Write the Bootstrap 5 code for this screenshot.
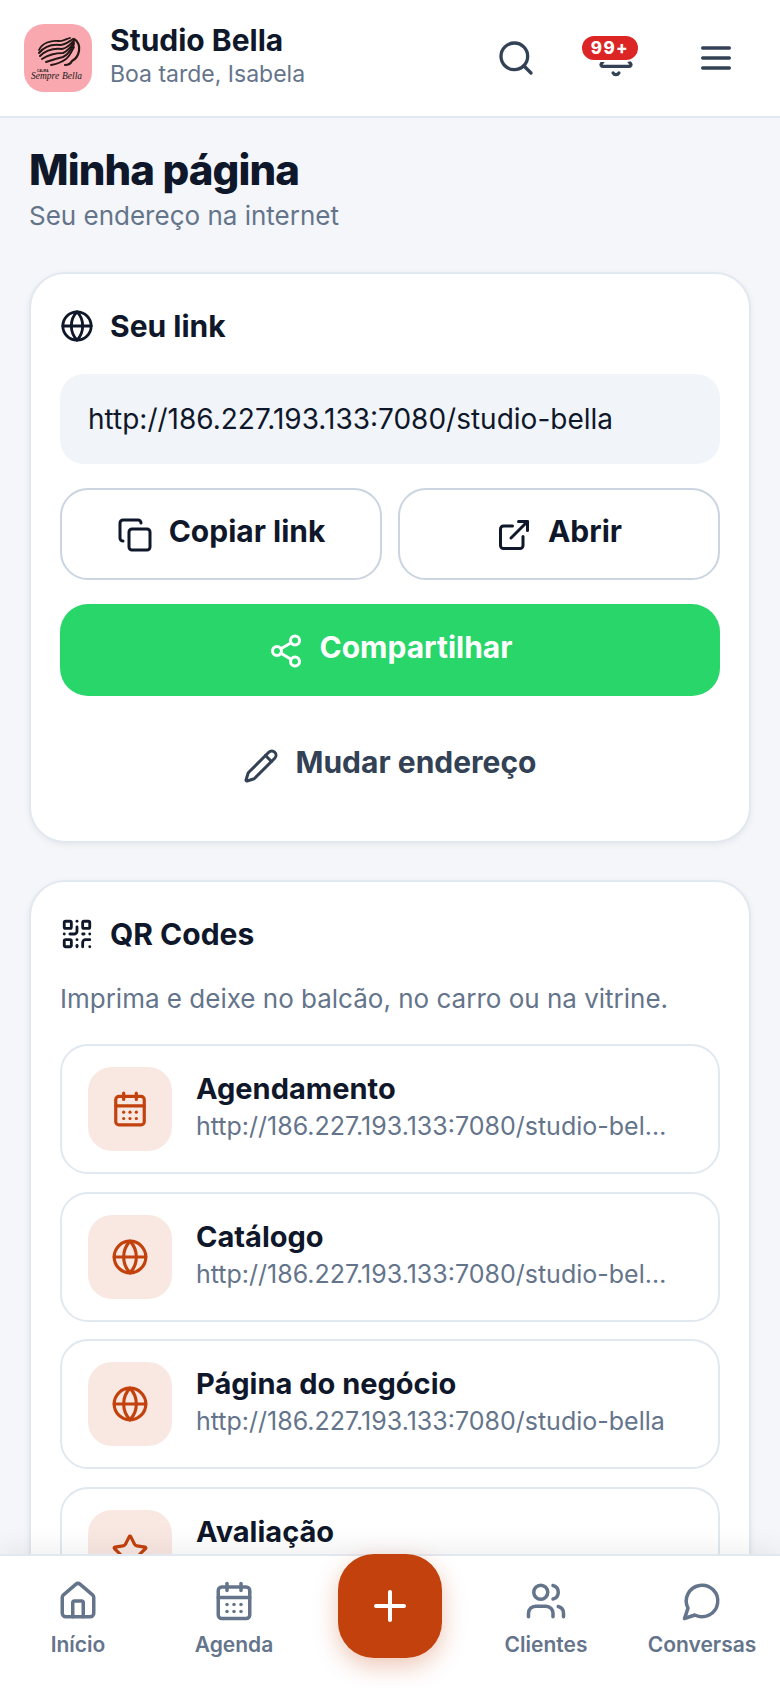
<!DOCTYPE html>
<html lang="pt-BR">
<head>
<meta charset="utf-8">
<title>Minha página</title>
<link href="https://cdn.jsdelivr.net/npm/bootstrap@5.3.0/dist/css/bootstrap.min.css" rel="stylesheet">
<style>
html,body{height:100%}
body{font-family:Inter,"Liberation Sans",sans-serif;background:#f4f6f9;color:#0f172a;overflow:hidden}
.shell{height:1688px}
.ico{fill:none;stroke:currentColor;stroke-width:2;stroke-linecap:round;stroke-linejoin:round;flex:none;display:block}
.topbar{height:118px;flex:none;background:#fff;border-bottom:2px solid #e2e8f0;padding:0 44px 0 24px}
.brand-logo{width:68px;height:68px;border-radius:20px;flex:none;display:block}
.brand-text{margin:0 0 5px 18px}
.brand-name{font-size:30px;font-weight:700;line-height:36px;margin-bottom:1px}
.brand-sub{font-size:23px;line-height:30px;color:#64748b}
.top-btn{width:40px;height:40px;color:#334155;position:relative}
.top-actions{gap:60px}
.bubble{position:absolute;left:-16px;top:-4px;width:60px;height:28px;border-radius:14px;background:#dc2626;border:2px solid #fff;color:#fff;font-size:17px;font-weight:800;line-height:24px;text-align:center;letter-spacing:1.4px}
.page{padding:27px 29px 0;min-height:0}
.page-title{font-size:42px;font-weight:800;line-height:50px;margin:0;letter-spacing:-.9px}
.page-sub{font-size:26px;line-height:34px;color:#64748b;margin-top:4px}
.panel{border:2px solid #e2e8f0;border-radius:36px;background:#fff;box-shadow:0 2px 6px rgba(15,23,42,.06);padding:32px 29px 0}
.panel-a{margin-top:39px;height:571px}
.panel-b{margin-top:37px}
.panel-head{font-size:30px;font-weight:700;line-height:40px;gap:16px}
.link-box{height:90px;margin-top:28px;border-radius:24px;background:#f1f5f9;padding:0 28px;font-size:28px;display:flex;align-items:center}
.two-up{gap:16px;margin-top:24px}
.btn.act{height:92px;border-radius:28px;font-size:30px;font-weight:700;display:flex;align-items:center;justify-content:center;gap:16px;padding:0}
.btn.act .ico{margin-top:2px}
.btxt{margin-bottom:5px}
.btn.ghost{flex:1 1 0;border:2px solid #cbd5e1;background:#fff;color:#0f172a}
.btn.wa{width:100%;margin-top:24px;background:#28d66a;border:0;color:#fff}
.btn.plain{width:100%;margin-top:27px;height:84px;background:transparent;border:0;color:#334155}
.panel-note{font-size:26px;line-height:34px;color:#64748b;margin-top:28px}
.qr-list{gap:17.6px;margin-top:28px}
.qr-row{height:130px;flex:none;border:2px solid #e2e8f0;border-radius:28px;padding:0 48px 0 26px;gap:24px;background:#fff}
.qr-tile{width:84px;height:84px;border-radius:24px;background:#f9e8e1;color:#c2410c;flex:none}
.qr-text{margin-bottom:4px}
.qr-name{font-size:29px;font-weight:700;line-height:36px;margin-bottom:2px}
.qr-url{font-size:25px;line-height:34px;color:#64748b}
.bottombar{height:134px;flex:none;background:#fff;border-top:2px solid #e2e8f0;box-shadow:0 -8px 24px rgba(15,23,42,.06);position:relative;z-index:5}
.tab{flex:1 1 0;min-width:0;color:#64748b;font-size:21px;font-weight:600;line-height:28px;padding-top:24px;gap:9px;white-space:nowrap}
.fab{width:104px;height:104px;border-radius:36px;background:#c2410c;color:#fff;box-shadow:0 8px 24px rgba(194,65,12,.3);margin-top:-2px}
.fab-wrap{flex:1 1 0}
.logo-script{font-family:"Liberation Serif",serif;font-style:italic;fill:#231815}
.logo-tiny{font-family:"Liberation Sans",sans-serif;font-weight:700;fill:#231815}
</style>
</head>
<body>
<div class="shell d-flex flex-column">
  <header class="topbar d-flex align-items-center justify-content-between">
    <div class="d-flex align-items-center">
      <svg class="brand-logo" viewBox="0 0 68 68" role="img" aria-label="Logo">
        <rect width="68" height="68" fill="#f9a8b0"/>
        <g fill="none" stroke="#231815" stroke-linecap="round">
          <path d="M15 26C18 19 27 16 35 17C39 17.500 42 15 46 14" stroke-width="1.800"/>
          <path d="M15 29C20 23 28 20 36 21C41 21 44 18 49 15" stroke-width="2"/>
          <path d="M16 32C22 26 30 24 38 25C43 24 47 20 50 16" stroke-width="2"/>
          <path d="M18 35C24 31 32 29 39 29C44 27 47 23 50 18" stroke-width="2"/>
          <path d="M22 38C28 36 34 34 39 33C44 31 47 26 50 20" stroke-width="2"/>
          <path d="M27 41C33 40 38 38 42 35C46 32 48 27 50 23" stroke-width="1.800"/>
          <path d="M50 15C54 17 56 22 55 27C54 32 52 35 48 37C47 39 44 41 41 41" stroke-width="2.200"/>
        </g>
        <text class="logo-tiny" x="13" y="48" font-size="3">CALIRA</text>
        <text class="logo-script" x="7" y="55" font-size="9.500">Sempre</text>
        <text class="logo-script" x="38" y="55" font-size="9.500">Bella</text>
      </svg>
      <div class="brand-text">
        <div class="brand-name">Studio Bella</div>
        <div class="brand-sub">Boa tarde, Isabela</div>
      </div>
    </div>
    <div class="d-flex align-items-center top-actions">
      <div class="top-btn"><svg class="ico" width="40" height="40" viewBox="0 0 24 24"><path d="m21 21-4.34-4.34"/><circle cx="11" cy="11" r="8"/></svg></div>
      <div class="top-btn"><svg class="ico" width="40" height="40" viewBox="0 0 24 24"><path d="M10.268 21a2 2 0 0 0 3.464 0"/><path d="M3.262 15.326A1 1 0 0 0 4 17h16a1 1 0 0 0 .74-1.673C19.41 13.956 18 12.499 18 8A6 6 0 0 0 6 8c0 4.499-1.411 5.956-2.738 7.326"/></svg><span class="bubble">99+</span></div>
      <div class="top-btn"><svg class="ico" width="40" height="40" viewBox="0 0 24 24"><path d="M4 6h16"/><path d="M4 12h16"/><path d="M4 18h16"/></svg></div>
    </div>
  </header>

  <main class="page flex-grow-1 overflow-hidden">
    <h1 class="page-title">Minha página</h1>
    <div class="page-sub">Seu endereço na internet</div>

    <section class="panel panel-a">
      <div class="panel-head d-flex align-items-center">
        <svg class="ico" width="34" height="34" viewBox="0 0 24 24"><circle cx="12" cy="12" r="10"/><path d="M12 2a14.500 14.500 0 0 0 0 20 14.500 14.500 0 0 0 0-20"/><path d="M2 12h20"/></svg>
        <span>Seu link</span>
      </div>
      <div class="link-box">http://186.227.193.133:7080/studio-bella</div>
      <div class="d-flex two-up">
        <button class="btn act ghost" type="button"><svg class="ico" width="36" height="36" viewBox="0 0 24 24"><rect width="14" height="14" x="8" y="8" rx="2" ry="2"/><path d="M4 16c-1.100 0-2-.9-2-2V4c0-1.100.9-2 2-2h10c1.100 0 2 .9 2 2"/></svg><span class="btxt">Copiar link</span></button>
        <button class="btn act ghost" type="button"><svg class="ico" width="36" height="36" viewBox="0 0 24 24"><path d="M15 3h6v6"/><path d="M10 14 21 3"/><path d="M18 13v6a2 2 0 0 1-2 2H5a2 2 0 0 1-2-2V8a2 2 0 0 1 2-2h6"/></svg><span class="btxt">Abrir</span></button>
      </div>
      <button class="btn act wa" type="button"><svg class="ico" width="36" height="36" viewBox="0 0 24 24"><circle cx="18" cy="5" r="3"/><circle cx="6" cy="12" r="3"/><circle cx="18" cy="19" r="3"/><line x1="8.590" x2="15.420" y1="13.510" y2="17.490"/><line x1="15.410" x2="8.590" y1="6.510" y2="10.490"/></svg><span class="btxt">Compartilhar</span></button>
      <button class="btn act plain" type="button"><svg class="ico" width="36" height="36" viewBox="0 0 24 24"><path d="M21.174 6.812a1 1 0 0 0-3.986-3.987L3.842 16.174a2 2 0 0 0-.5.83l-1.321 4.352a.5.5 0 0 0 .623.622l4.353-1.32a2 2 0 0 0 .83-.497z"/><path d="m15 5 4 4"/></svg><span class="btxt">Mudar endereço</span></button>
    </section>

    <section class="panel panel-b">
      <div class="panel-head d-flex align-items-center">
        <svg class="ico" width="34" height="34" viewBox="0 0 24 24"><rect width="5" height="5" x="3" y="3" rx="1"/><rect width="5" height="5" x="16" y="3" rx="1"/><rect width="5" height="5" x="3" y="16" rx="1"/><path d="M21 16h-3a2 2 0 0 0-2 2v3"/><path d="M21 21v.01"/><path d="M12 7v3a2 2 0 0 1-2 2H7"/><path d="M3 12h.01"/><path d="M12 3h.01"/><path d="M12 16v.01"/><path d="M16 12h1"/><path d="M21 12v.01"/><path d="M12 21v-1"/></svg>
        <span>QR Codes</span>
      </div>
      <div class="panel-note">Imprima e deixe no balcão, no carro ou na vitrine.</div>
      <div class="qr-list d-flex flex-column">
        <div class="qr-row d-flex align-items-center">
          <div class="qr-tile d-flex align-items-center justify-content-center"><svg class="ico" width="38" height="38" viewBox="0 0 24 24"><path d="M8 2v4"/><path d="M16 2v4"/><rect width="18" height="18" x="3" y="4" rx="2"/><path d="M3 10h18"/><path d="M8 14h.01"/><path d="M12 14h.01"/><path d="M16 14h.01"/><path d="M8 18h.01"/><path d="M12 18h.01"/><path d="M16 18h.01"/></svg></div>
          <div class="qr-text overflow-hidden"><div class="qr-name">Agendamento</div><div class="qr-url text-truncate">http://186.227.193.133:7080/studio-bella/agendar</div></div>
        </div>
        <div class="qr-row d-flex align-items-center">
          <div class="qr-tile d-flex align-items-center justify-content-center"><svg class="ico" width="38" height="38" viewBox="0 0 24 24"><circle cx="12" cy="12" r="10"/><path d="M12 2a14.500 14.500 0 0 0 0 20 14.500 14.500 0 0 0 0-20"/><path d="M2 12h20"/></svg></div>
          <div class="qr-text overflow-hidden"><div class="qr-name">Catálogo</div><div class="qr-url text-truncate">http://186.227.193.133:7080/studio-bella/catalogo</div></div>
        </div>
        <div class="qr-row d-flex align-items-center">
          <div class="qr-tile d-flex align-items-center justify-content-center"><svg class="ico" width="38" height="38" viewBox="0 0 24 24"><circle cx="12" cy="12" r="10"/><path d="M12 2a14.500 14.500 0 0 0 0 20 14.500 14.500 0 0 0 0-20"/><path d="M2 12h20"/></svg></div>
          <div class="qr-text overflow-hidden"><div class="qr-name">Página do negócio</div><div class="qr-url text-truncate">http://186.227.193.133:7080/studio-bella</div></div>
        </div>
        <div class="qr-row d-flex align-items-center">
          <div class="qr-tile d-flex align-items-center justify-content-center"><svg class="ico" width="38" height="38" viewBox="0 0 24 24"><path d="M11.525 2.295a.53.53 0 0 1 .95 0l2.31 4.679a2.123 2.123 0 0 0 1.595 1.16l5.166.756a.53.53 0 0 1 .294.904l-3.736 3.638a2.123 2.123 0 0 0-.611 1.878l.882 5.14a.53.53 0 0 1-.771.56l-4.618-2.428a2.122 2.122 0 0 0-1.973 0L6.396 21.01a.53.53 0 0 1-.77-.56l.881-5.139a2.122 2.122 0 0 0-.611-1.879L2.16 9.795a.53.53 0 0 1 .294-.906l5.165-.755a2.122 2.122 0 0 0 1.597-1.16z"/></svg></div>
          <div class="qr-text overflow-hidden"><div class="qr-name">Avaliação</div><div class="qr-url text-truncate">http://186.227.193.133:7080/studio-bella/avaliar</div></div>
        </div>
      </div>
    </section>
  </main>

  <nav class="bottombar d-flex">
    <div class="tab d-flex flex-column align-items-center"><svg class="ico" width="42" height="42" viewBox="0 0 24 24"><path d="M15 21v-8a1 1 0 0 0-1-1h-4a1 1 0 0 0-1 1v8"/><path d="M3 10a2 2 0 0 1 .709-1.528l7-5.999a2 2 0 0 1 2.582 0l7 5.999A2 2 0 0 1 21 10v9a2 2 0 0 1-2 2H5a2 2 0 0 1-2-2z"/></svg><span>Início</span></div>
    <div class="tab d-flex flex-column align-items-center"><svg class="ico" width="42" height="42" viewBox="0 0 24 24"><path d="M8 2v4"/><path d="M16 2v4"/><rect width="18" height="18" x="3" y="4" rx="2"/><path d="M3 10h18"/><path d="M8 14h.01"/><path d="M12 14h.01"/><path d="M16 14h.01"/><path d="M8 18h.01"/><path d="M12 18h.01"/><path d="M16 18h.01"/></svg><span>Agenda</span></div>
    <div class="fab-wrap d-flex justify-content-center"><div class="fab d-flex align-items-center justify-content-center"><svg class="ico" width="48" height="48" viewBox="0 0 24 24"><path d="M5 12h14"/><path d="M12 5v14"/></svg></div></div>
    <div class="tab d-flex flex-column align-items-center"><svg class="ico" width="42" height="42" viewBox="0 0 24 24"><path d="M16 21v-2a4 4 0 0 0-4-4H6a4 4 0 0 0-4 4v2"/><circle cx="9" cy="7" r="4"/><path d="M22 21v-2a4 4 0 0 0-3-3.87"/><path d="M16 3.13a4 4 0 0 1 0 7.75"/></svg><span>Clientes</span></div>
    <div class="tab d-flex flex-column align-items-center"><svg class="ico" width="42" height="42" viewBox="0 0 24 24"><path d="M7.9 20A9 9 0 1 0 4 16.1L2 22Z"/></svg><span>Conversas</span></div>
  </nav>
</div>
<script src="https://cdn.jsdelivr.net/npm/bootstrap@5.3.0/dist/js/bootstrap.bundle.min.js"></script>
</body>
</html>
